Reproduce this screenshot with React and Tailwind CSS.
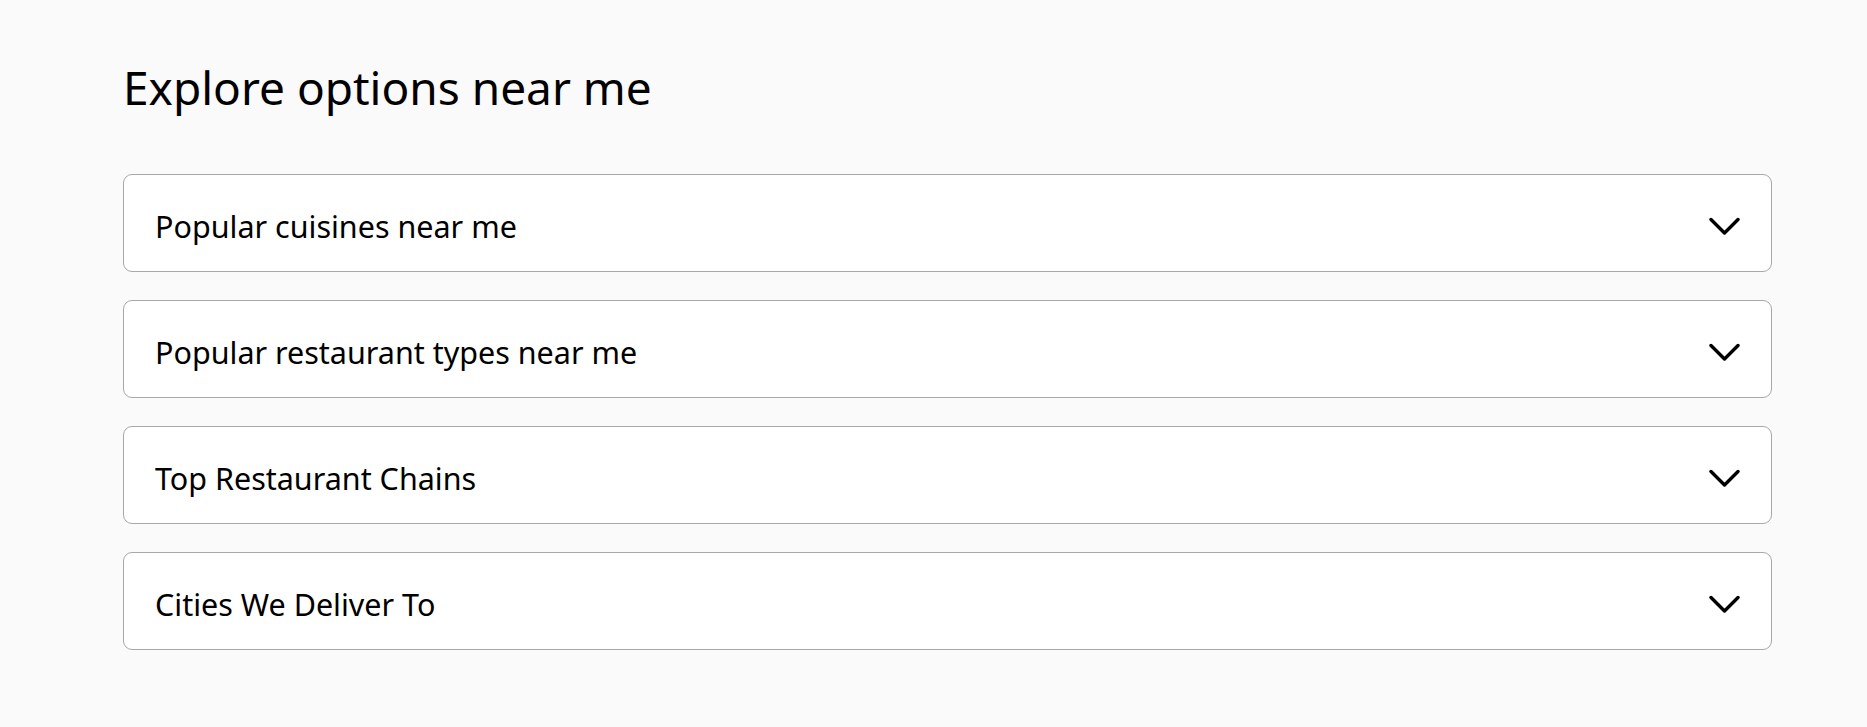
const items = [
  'Popular cuisines near me',
  'Popular restaurant types near me',
  'Top Restaurant Chains',
  'Cities We Deliver To',
]

function Chevron() {
  return (
    <svg width="31" height="19" viewBox="0 0 31 19" fill="none" stroke="black" strokeWidth="3.4" strokeLinecap="round" strokeLinejoin="round">
      <path d="M2 2.5l13.5 13.5L29 2.5" />
    </svg>
  )
}

export default function App() {
  return (
    <div className="min-h-[727px] bg-[#fafafa] pt-[56px]" style={{ fontFamily: '"Noto Sans", "Open Sans", sans-serif' }}>
      <div className="ml-[123px] w-[1649px]">
        <h1 className="text-[46px] leading-[62px] font-normal text-black">Explore options near me</h1>
        <div className="mt-[56px] flex flex-col gap-[28px]">
          {items.map((t) => (
            <div
              key={t}
              className="h-[98px] bg-white border border-[#a8a8a8] rounded-[9px] flex items-center justify-between pt-[7px] pl-[31px] pr-[31px]"
            >
              <span className="text-[30.5px] text-black">{t}</span>
              <Chevron />
            </div>
          ))}
        </div>
      </div>
    </div>
  )
}
